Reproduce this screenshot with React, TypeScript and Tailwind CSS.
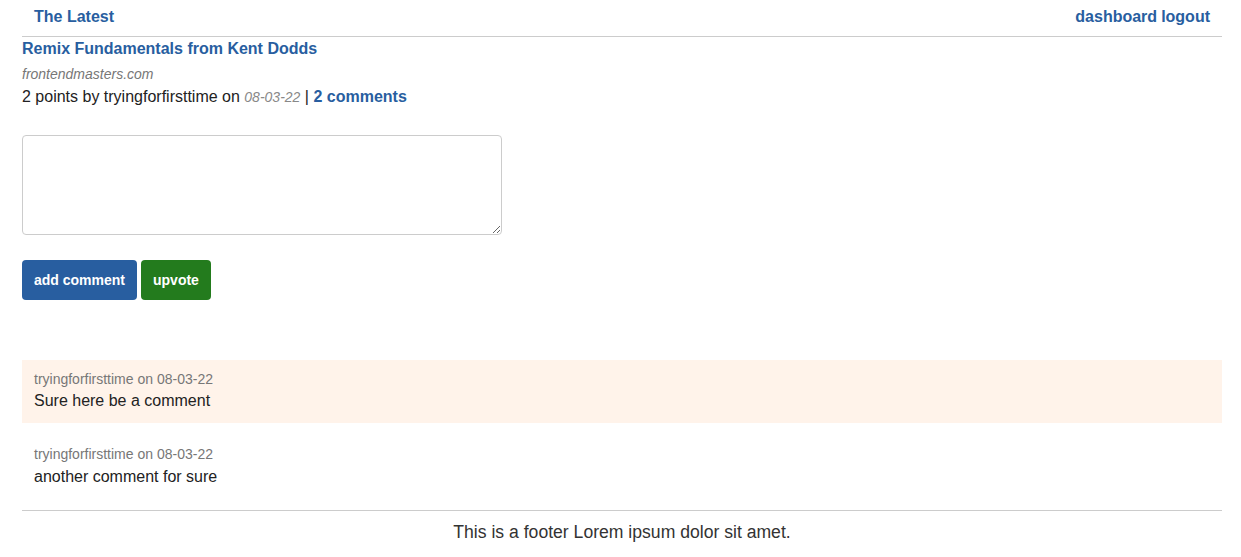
import React from "react";

export default function App() {
  return (
    <div className="min-h-[557px] bg-white font-['Liberation_Sans',Arial,sans-serif] text-[#333]">
      <div className="ml-[22px] w-[1200px]">
        <header className="flex items-center justify-between border-b border-[#ccc] px-[12px] pt-[5px] pb-[7px]">
          <a className="text-[16px] font-bold leading-[24px] text-[#285ea0]" href="#">The Latest</a>
          <nav className="flex gap-[4px] text-[16px] font-bold leading-[24px] text-[#285ea0]">
            <a href="#">dashboard</a>
            <a href="#">logout</a>
          </nav>
        </header>
        <main>
          <a className="block text-[16px] font-bold leading-[24px] text-[#285ea0]" href="#">
            Remix Fundamentals from Kent Dodds
          </a>
          <div className="mt-[3px] text-[14px] italic leading-[21px] text-[#777]">frontendmasters.com</div>
          <div className="text-[16px] leading-[24px] text-[#222]">
            2 points by tryingforfirsttime on{" "}
            <span className="text-[14px] italic text-[#888]">08-03-22</span> |{" "}
            <a className="font-bold text-[#285ea0]" href="#">2 comments</a>
          </div>
          <form className="mt-[26px]">
            <textarea className="block h-[100px] w-[480px] rounded-[4px] border border-[#ccc] p-[6px] text-[14px]" />
            <div className="mt-[25px] flex gap-[4px]">
              <button type="button" className="h-[40px] rounded-[4px] bg-[#285ea0] px-[12px] text-[14px] font-bold text-white">
                add comment
              </button>
              <button type="button" className="h-[40px] rounded-[4px] bg-[#237b1d] px-[12px] text-[14px] font-bold text-white">
                upvote
              </button>
            </div>
          </form>
          <section className="mt-[60px]">
            <div className="mb-[11px] bg-[#fff3ea] px-[12px] pt-[9px] pb-[10px]">
              <div className="text-[14px] leading-[20px] text-[#777]">tryingforfirsttime on 08-03-22</div>
              <div className="text-[16px] leading-[24px] text-[#222]">Sure here be a comment</div>
            </div>
            <div className="px-[12px] py-[10px]">
              <div className="text-[14px] leading-[20px] text-[#777]">tryingforfirsttime on 08-03-22</div>
              <div className="mt-[1px] text-[16px] leading-[24px] text-[#222]">another comment for sure</div>
            </div>
          </section>
        </main>
        <footer className="mt-[11px] border-t border-[#ccc] pt-[8px] text-center text-[17.6px] leading-[26px] text-[#333]">
          This is a footer Lorem ipsum dolor sit amet.
        </footer>
      </div>
    </div>
  );
}
